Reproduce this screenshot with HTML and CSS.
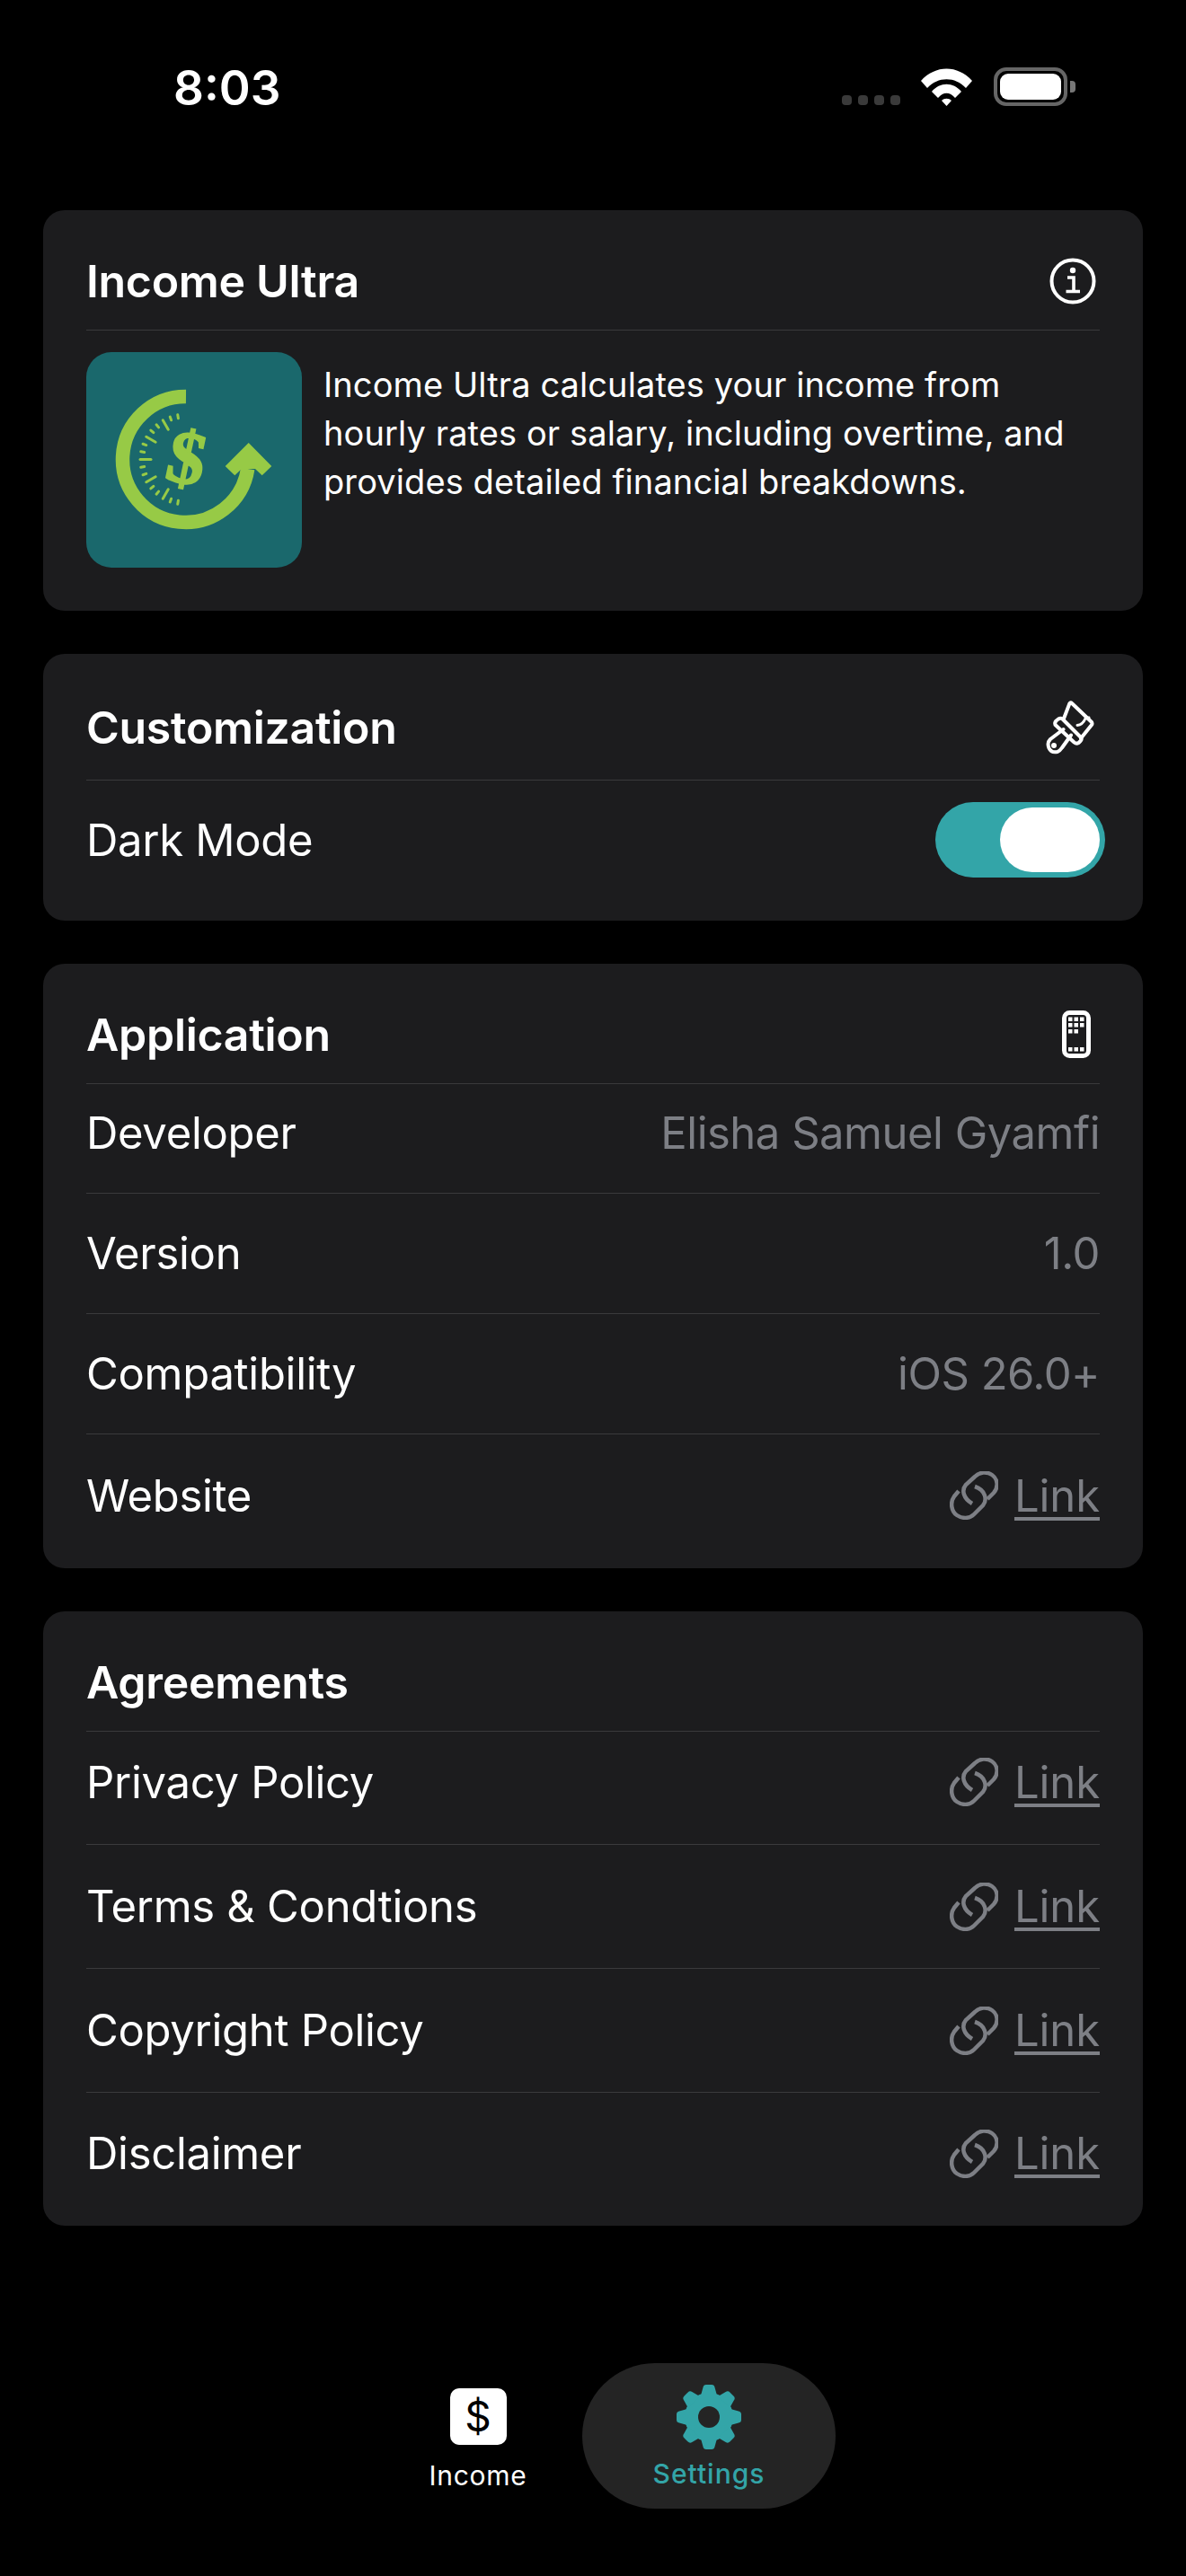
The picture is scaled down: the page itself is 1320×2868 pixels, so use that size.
FILE: index.html
```html
<!DOCTYPE html>
<html lang="en">
<head>
    <meta charset="UTF-8">
    <meta name="viewport" content="width=device-width, initial-scale=1.0">
    <title>Settings</title>
    <link rel="stylesheet" href="styles.css">
</head>
<body>
    <!-- shared link icon -->
    <svg class="icon-defs" width="0" height="0">
        <symbol id="chain" viewBox="0 0 54 54">
            <path d="M42 31L49 24C55 17 53 8 47 4C41 0 33 1 28 6L18 15C13 21 15 30 25 36" fill="none" stroke="#7d7f85" stroke-width="4.500"/>
            <path d="M10 22L5 28C0 35 2 45 8 49C14 53 22 53 27 48L37 38C42 32 40 21 28 17" fill="none" stroke="#7d7f85" stroke-width="4.500"/>
        </symbol>
    </svg>

    <div class="status-bar">
        <span class="time">8:03</span>
        <div class="status-icons">
            <div class="signal"><i></i><i></i><i></i><i></i></div>
            <svg class="wifi" width="57" height="42" viewBox="0 0 57 42">
                <path d="M0 14 C16 -4 41 -4 57 14 L50 22 C38 9 19 9 7 22Z" fill="#fff"/>
                <path d="M12 26 C21 15 36 15 45 26 L38 33 C32 26 25 26 19 33Z" fill="#fff"/>
                <path d="M23 36 C26 33 31 33 34 36 L28.500 42Z" fill="#fff"/>
            </svg>
            <div class="battery"><div class="battery-fill"></div></div>
        </div>
    </div>

    <main class="cards">
        <section class="card card-about">
            <div class="card-head">
                <h2>Income Ultra</h2>
                <svg class="head-icon icon-info" width="52" height="52" viewBox="0 0 52 52">
                    <circle cx="26" cy="26" r="23.500" fill="none" stroke="#fff" stroke-width="4"/>
                    <circle cx="26" cy="14" r="3.200" fill="#fff"/>
                    <path d="M20 22H27V37M18.500 37.500H34" fill="none" stroke="#fff" stroke-width="3.600"/>
                </svg>
            </div>
            <div class="about-body">
                <svg class="app-icon" width="240" height="240" viewBox="0 0 240 240">
                    <rect width="240" height="240" rx="28" fill="#1a686c"/>
                    <path d="M111 49.500A70 70 0 1 0 179.700 130" fill="none" stroke="#97ca46" stroke-width="15.500"/>
                    <polygon points="180.700,101 154.700,127 165.300,137.300 173,130 188,130 195.700,137.300 206.300,127" fill="#97ca46"/>
                    <g stroke="#97ca46" stroke-width="3" stroke-linecap="round">
                        <line x1="60" y1="119.500" x2="72" y2="119.500"/>
                        <line x1="60" y1="119.500" x2="64" y2="119.500" transform="rotate(10 110.500 119.500)"/>
                        <line x1="60" y1="119.500" x2="64" y2="119.500" transform="rotate(20 110.500 119.500)"/>
                        <line x1="60" y1="119.500" x2="72" y2="119.500" transform="rotate(30 110.500 119.500)"/>
                        <line x1="60" y1="119.500" x2="64" y2="119.500" transform="rotate(40 110.500 119.500)"/>
                        <line x1="60" y1="119.500" x2="64" y2="119.500" transform="rotate(50 110.500 119.500)"/>
                        <line x1="60" y1="119.500" x2="72" y2="119.500" transform="rotate(60 110.500 119.500)"/>
                        <line x1="60" y1="119.500" x2="64" y2="119.500" transform="rotate(70 110.500 119.500)"/>
                        <line x1="60" y1="119.500" x2="64" y2="119.500" transform="rotate(80 110.500 119.500)"/>
                        <line x1="60" y1="119.500" x2="64" y2="119.500" transform="rotate(-10 110.500 119.500)"/>
                        <line x1="60" y1="119.500" x2="64" y2="119.500" transform="rotate(-20 110.500 119.500)"/>
                        <line x1="60" y1="119.500" x2="72" y2="119.500" transform="rotate(-30 110.500 119.500)"/>
                        <line x1="60" y1="119.500" x2="64" y2="119.500" transform="rotate(-40 110.500 119.500)"/>
                        <line x1="60" y1="119.500" x2="64" y2="119.500" transform="rotate(-50 110.500 119.500)"/>
                        <line x1="60" y1="119.500" x2="72" y2="119.500" transform="rotate(-60 110.500 119.500)"/>
                        <line x1="60" y1="119.500" x2="64" y2="119.500" transform="rotate(-70 110.500 119.500)"/>
                        <line x1="60" y1="119.500" x2="64" y2="119.500" transform="rotate(-80 110.500 119.500)"/>
                    </g>
                    <text class="app-icon-dollar" x="112" y="146" transform="rotate(12 112 118)">$</text>
                </svg>
                <p>Income Ultra calculates your income from hourly rates or salary, including overtime, and provides detailed financial breakdowns.</p>
            </div>
        </section>

        <section class="card card-custom">
            <div class="card-head">
                <h2>Customization</h2>
                <svg class="head-icon icon-brush" width="54" height="60" viewBox="0 0 54 60">
                    <g fill="none" stroke="#fff" stroke-width="4" stroke-linejoin="round" stroke-linecap="round">
                        <path d="M20 20L26.500 3Q27.500 1.500 29 3L51 24Q52 26 51 27L39 42"/>
                        <path d="M10.500 27Q9.500 24.500 11.500 22.500L14 20.500Q16.500 19 18.500 20.500L39 41Q40.500 43 38.500 45L36.500 47Q34 48.500 31.500 46.500Z"/>
                        <path d="M19.500 32L5 43Q1 47 3.500 53Q6 58.500 13 57Q16 55.500 18 52.500L28 38.500"/>
                        <path d="M35 27.500Q41 27 44 20L48 19" stroke-width="3"/>
                    </g>
                    <circle cx="9" cy="50" r="3" fill="#fff"/>
                </svg>
            </div>
            <div class="row row-toggle">
                <span>Dark Mode</span>
                <div class="toggle"><div class="toggle-thumb"></div></div>
            </div>
        </section>

        <section class="card card-app">
            <div class="card-head">
                <h2>Application</h2>
                <svg class="head-icon icon-phone" width="32" height="53" viewBox="0 0 32 53">
                    <rect x="2.500" y="2.500" width="27" height="48" rx="6" fill="none" stroke="#fff" stroke-width="5"/>
                    <g fill="#fff">
                        <rect x="7" y="7.500" width="4.500" height="4.500"/><rect x="13.500" y="7.500" width="4.500" height="4.500"/><rect x="20" y="7.500" width="4.500" height="4.500"/>
                        <rect x="7" y="14" width="4.500" height="4.500"/><rect x="13.500" y="14" width="4.500" height="4.500"/><rect x="20" y="14" width="4.500" height="4.500"/>
                        <rect x="7" y="21" width="4.500" height="4.500"/><rect x="13.500" y="21" width="4.500" height="4.500"/>
                        <rect x="7" y="41" width="4.500" height="4.500"/><rect x="13.500" y="41" width="4.500" height="4.500"/><rect x="20" y="41" width="4.500" height="4.500"/>
                    </g>
                </svg>
            </div>
            <div class="row"><span>Developer</span><span class="value">Elisha Samuel Gyamfi</span></div>
            <div class="row"><span>Version</span><span class="value">1.0</span></div>
            <div class="row"><span>Compatibility</span><span class="value">iOS 26.0+</span></div>
            <div class="row">
                <span>Website</span>
                <span class="value link-wrap"><svg width="54" height="54"><use href="#chain"/></svg><u>Link</u></span>
            </div>
        </section>

        <section class="card card-legal">
            <div class="card-head">
                <h2>Agreements</h2>
            </div>
            <div class="row">
                <span>Privacy Policy</span>
                <span class="value link-wrap"><svg width="54" height="54"><use href="#chain"/></svg><u>Link</u></span>
            </div>
            <div class="row">
                <span>Terms &amp; Condtions</span>
                <span class="value link-wrap"><svg width="54" height="54"><use href="#chain"/></svg><u>Link</u></span>
            </div>
            <div class="row">
                <span>Copyright Policy</span>
                <span class="value link-wrap"><svg width="54" height="54"><use href="#chain"/></svg><u>Link</u></span>
            </div>
            <div class="row">
                <span>Disclaimer</span>
                <span class="value link-wrap"><svg width="54" height="54"><use href="#chain"/></svg><u>Link</u></span>
            </div>
        </section>
    </main>

    <nav class="tabs">
        <div class="tab tab-income">
            <div class="dollar-box">$</div>
            <span>Income</span>
        </div>
        <div class="tab tab-settings">
            <svg width="72" height="72" viewBox="0 0 72 72">
                <g fill="#33a5a8">
                    <circle cx="36" cy="36" r="27"/>
                    <path id="tooth" d="M27 12L29.500 3Q30 0 33 0H39Q42 0 42.500 3L45 12Z"/>
                    <use href="#tooth" transform="rotate(45 36 36)"/>
                    <use href="#tooth" transform="rotate(90 36 36)"/>
                    <use href="#tooth" transform="rotate(135 36 36)"/>
                    <use href="#tooth" transform="rotate(180 36 36)"/>
                    <use href="#tooth" transform="rotate(225 36 36)"/>
                    <use href="#tooth" transform="rotate(270 36 36)"/>
                    <use href="#tooth" transform="rotate(315 36 36)"/>
                </g>
                <circle cx="36" cy="36" r="12" fill="#242424"/>
            </svg>
            <span>Settings</span>
        </div>
    </nav>
</body>
</html>
```

FILE: styles.css
```css
* {
    box-sizing: border-box;
}

body {
    font-family: 'Inter', sans-serif;
    background-color: #000;
    color: #fff;
    margin: 0;
    width: 1320px;
    height: 2868px;
    overflow: hidden;
}

.icon-defs {
    position: absolute;
}

.status-bar {
    height: 234px;
    padding: 71px 132px 0 193px;
    display: flex;
    justify-content: space-between;
    align-items: flex-start;
}

.time {
    font-size: 53px;
    font-weight: 600;
    line-height: 54px;
}

.status-icons {
    display: flex;
    align-items: flex-end;
    padding-top: 4px;
}

.signal {
    display: flex;
    gap: 7px;
    margin-right: 23px;
    padding-bottom: 1px;
}

.signal i {
    width: 11px;
    height: 11px;
    border-radius: 4px;
    background: #3a3a3a;
}

.wifi {
    margin-right: 24px;
}

.battery {
    width: 82px;
    height: 43px;
    border: 4px solid #666;
    border-radius: 14px;
    padding: 3px;
    position: relative;
}

.battery::after {
    content: "";
    position: absolute;
    right: -13px;
    top: 11px;
    width: 6px;
    height: 13px;
    border-radius: 0 4px 4px 0;
    background: #777;
}

.battery-fill {
    height: 100%;
    background: #fff;
    border-radius: 9px;
}

.cards {
    padding: 0 48px;
    display: flex;
    flex-direction: column;
    gap: 48px;
}

.card {
    background: #1c1c1e;
    border-radius: 24px;
    padding: 0 48px;
}

.card-head {
    height: 134px;
    padding-top: 24px;
    border-bottom: 1px solid #3a3a3c;
    display: flex;
    justify-content: space-between;
    align-items: center;
}

.card-custom .card-head {
    height: 141px;
}

h2 {
    font-size: 50px;
    font-weight: 600;
    letter-spacing: -0.3px;
    margin: 0;
}

.icon-info {
    margin-right: 4px;
}

.icon-brush {
    margin-right: 6px;
}

.icon-phone {
    margin-right: 10px;
}

.about-body {
    display: flex;
    gap: 24px;
    padding: 24px 0 48px;
}

.about-body p {
    margin: 0;
    padding-top: 9px;
    font-size: 38px;
    letter-spacing: 0.1px;
    line-height: 54px;
    width: 864px;
}

.app-icon-dollar {
    font-family: 'Liberation Serif', serif;
    font-weight: 700;
    font-size: 84px;
    fill: #97ca46;
    stroke: #97ca46;
    stroke-width: 2px;
    text-anchor: middle;
}

.row {
    height: 134px;
    display: flex;
    justify-content: space-between;
    align-items: center;
    font-size: 49px;
    letter-spacing: -0.3px;
    border-bottom: 1px solid #3a3a3c;
}

.card-legal .row {
    height: 138px;
}

.card-app .row:nth-child(2) {
    height: 122px;
    padding-bottom: 13px;
}

.card-legal .row:nth-child(2) {
    height: 126px;
    padding-bottom: 13px;
}

.card .row:last-child {
    height: 149px;
    padding-bottom: 13px;
    border-bottom: 0;
}

.card-legal .row:last-child {
    height: 148px;
}

.card .row-toggle:last-child {
    height: 156px;
    padding-bottom: 24px;
}

.value {
    color: #7d7f85;
    letter-spacing: -0.5px;
}

.link-wrap {
    display: flex;
    align-items: center;
    gap: 18px;
}

.link-wrap u {
    letter-spacing: -0.1px;
    text-decoration-thickness: 4px;
    text-underline-offset: 6px;
}

.toggle {
    width: 189px;
    height: 84px;
    margin-right: -6px;
    border-radius: 42px;
    background: #33a5a8;
    padding: 6px;
    display: flex;
    justify-content: flex-end;
}

.toggle-thumb {
    width: 111px;
    height: 72px;
    border-radius: 36px;
    background: #fff;
}

.tabs {
    margin-top: 153px;
    padding-left: 470px;
    display: flex;
    align-items: center;
    gap: 54px;
}

.tab {
    display: flex;
    flex-direction: column;
    align-items: center;
    font-size: 30px;
    letter-spacing: 0.7px;
}

.tab-income {
    width: 124px;
    padding-top: 8px;
}

.dollar-box {
    width: 63px;
    height: 63px;
    border-radius: 10px;
    background: #fff;
    color: #000;
    font-size: 46px;
    letter-spacing: 0;
    line-height: 63px;
    text-align: center;
    margin-bottom: 16px;
}

.tab-settings {
    width: 282px;
    height: 162px;
    border-radius: 81px;
    background: #242424;
    color: #33a5a8;
    font-weight: 500;
    letter-spacing: 1px;
    padding-top: 24px;
    gap: 9px;
}
```
